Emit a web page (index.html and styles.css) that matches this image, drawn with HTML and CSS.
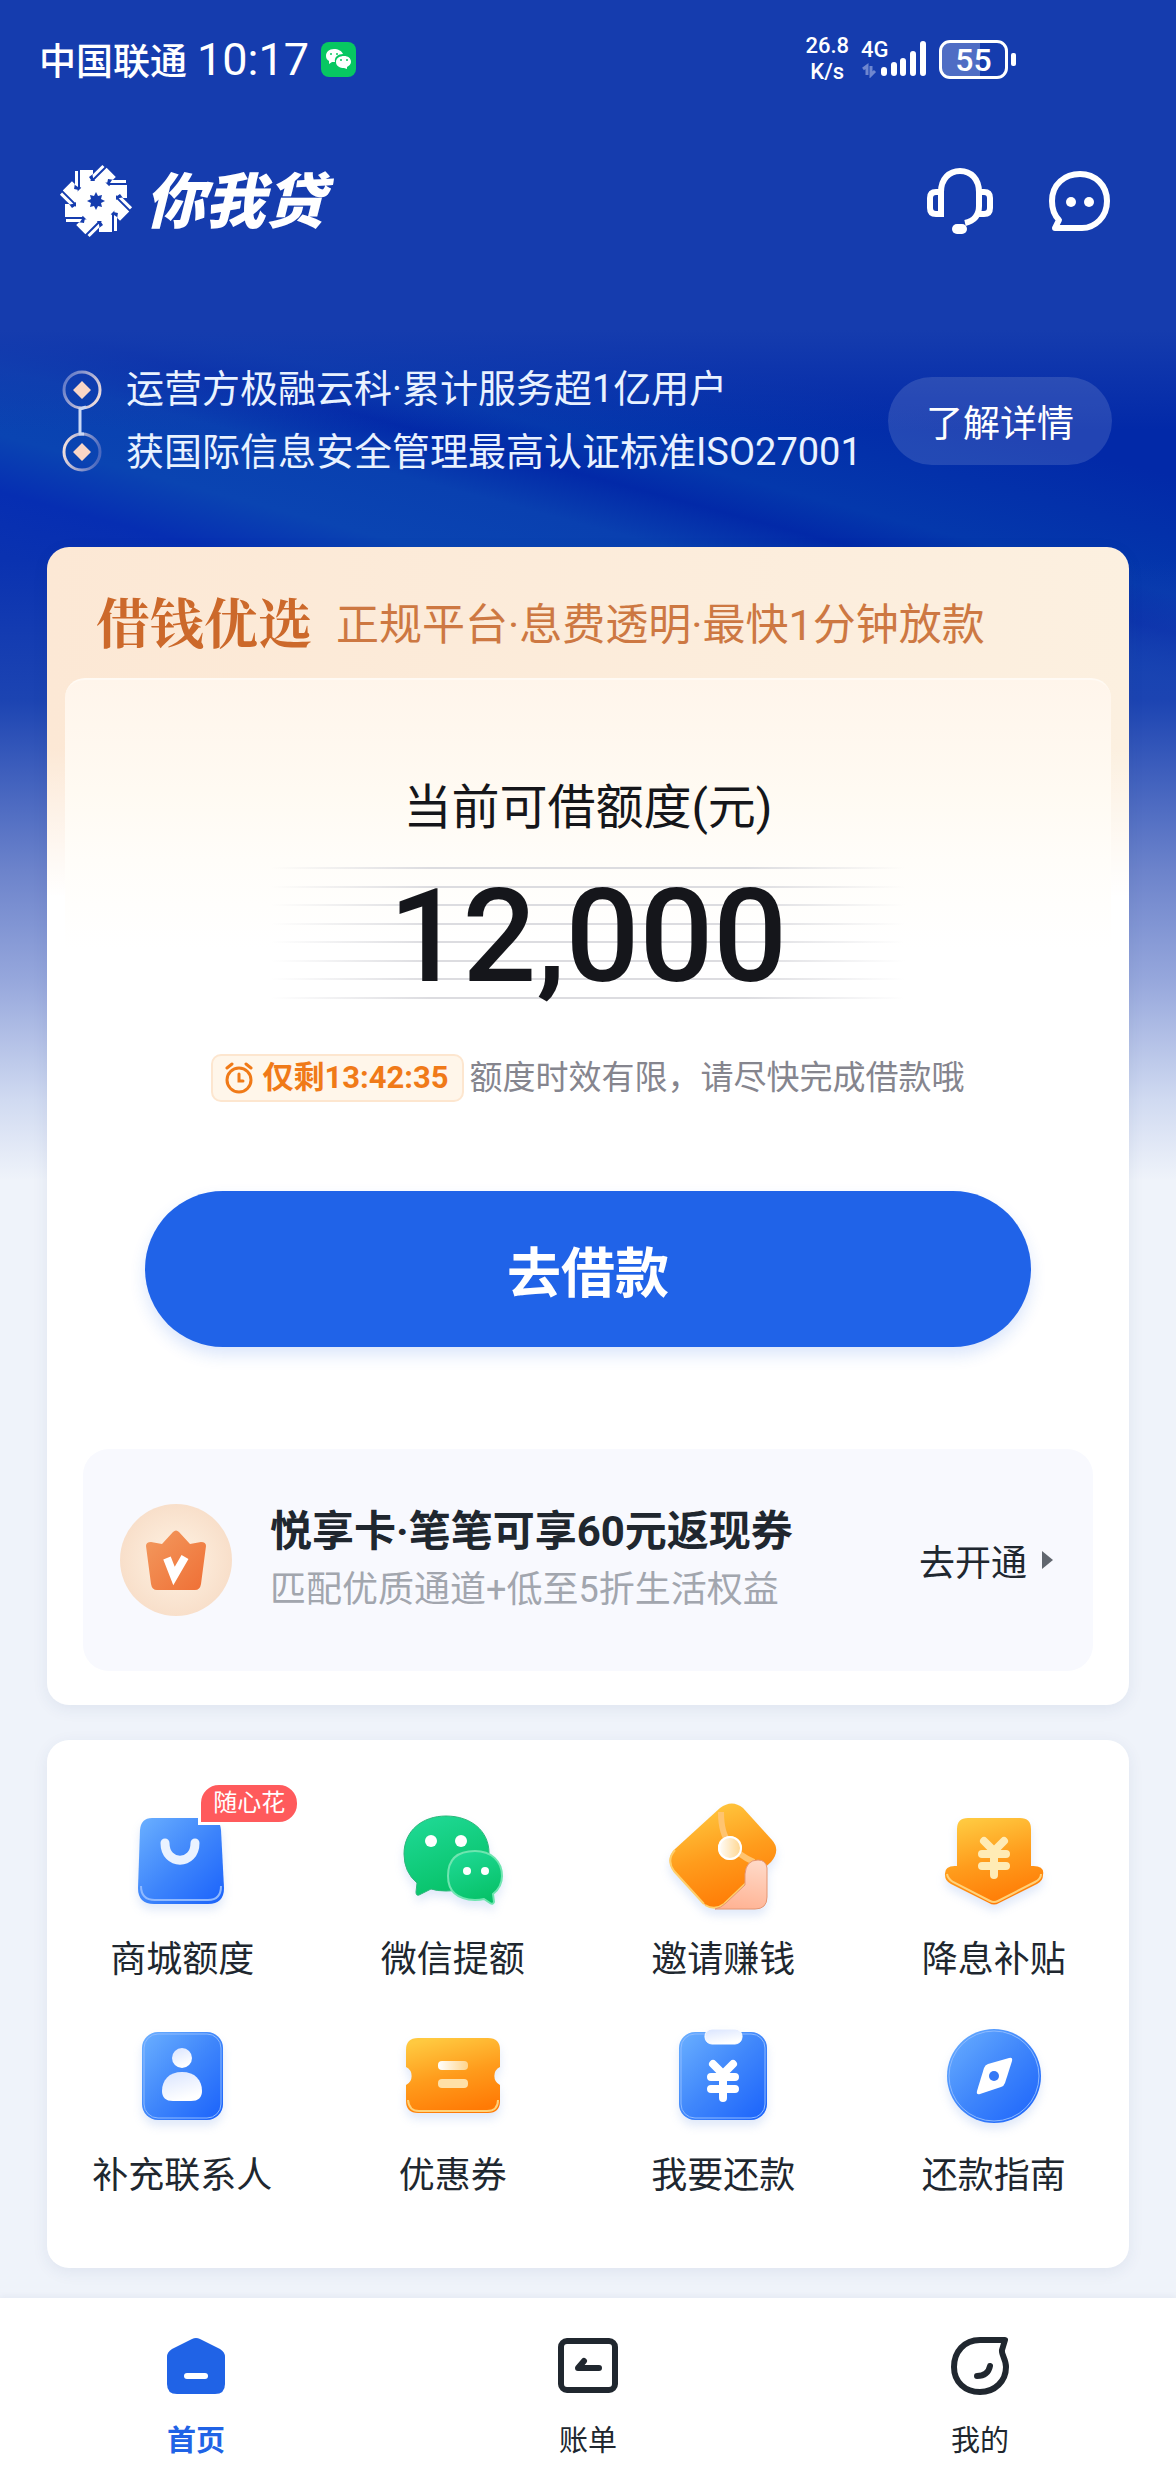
FILE: index.html
```html
<!DOCTYPE html>
<html lang="zh-CN">
<head>
    <meta charset="UTF-8">
    <meta name="viewport" content="width=device-width, initial-scale=1.0">
    <title>你我贷</title>
    <link rel="stylesheet" href="styles.css">
</head>
<body>
    <!-- shared gradients and shapes -->
    <svg class="defs" width="0" height="0" aria-hidden="true">
        <defs>
            <linearGradient id="blue" x1="0" y1="0" x2="1" y2="1">
                <stop offset="0" stop-color="#6bb0ff"/>
                <stop offset="0.5" stop-color="#3f86fb"/>
                <stop offset="1" stop-color="#1a62fb"/>
            </linearGradient>
            <linearGradient id="orange" x1="0.3" y1="0" x2="0.6" y2="1">
                <stop offset="0" stop-color="#ffc940"/>
                <stop offset="0.5" stop-color="#ff9c1c"/>
                <stop offset="1" stop-color="#ff7a05"/>
            </linearGradient>
            <linearGradient id="green" x1="0.2" y1="0" x2="0.6" y2="1">
                <stop offset="0" stop-color="#1fd995"/>
                <stop offset="1" stop-color="#06c167"/>
            </linearGradient>
            <linearGradient id="pale" x1="0" y1="0" x2="0.4" y2="1">
                <stop offset="0" stop-color="#d9e4ff"/>
                <stop offset="1" stop-color="#ffffff"/>
            </linearGradient>
            <linearGradient id="cream" x1="0" y1="0" x2="1" y2="0">
                <stop offset="0" stop-color="#ffffff"/>
                <stop offset="1" stop-color="#ffd48a"/>
            </linearGradient>
            <linearGradient id="peach" x1="0.6" y1="0" x2="0.4" y2="1">
                <stop offset="0" stop-color="#ffd9c7"/>
                <stop offset="1" stop-color="#ffb394"/>
            </linearGradient>
            <linearGradient id="crown" x1="0" y1="0" x2="1" y2="1">
                <stop offset="0" stop-color="#f39a5f"/>
                <stop offset="1" stop-color="#ef6f35"/>
            </linearGradient>
            <radialGradient id="coin">
                <stop offset="0" stop-color="#fff3e4"/>
                <stop offset="1" stop-color="#f8dfca"/>
            </radialGradient>
            <linearGradient id="line" x1="0" y1="0" x2="1" y2="0">
                <stop offset="0" stop-color="#dcdce0" stop-opacity="0"/>
                <stop offset="0.25" stop-color="#dcdce0"/>
                <stop offset="0.75" stop-color="#dcdce0"/>
                <stop offset="1" stop-color="#dcdce0" stop-opacity="0"/>
            </linearGradient>
            <linearGradient id="ringTop" x1="0" y1="0.2" x2="1" y2="0.8">
                <stop offset="0" stop-color="#5c76c8"/>
                <stop offset="1" stop-color="#f6e2dc"/>
            </linearGradient>
            <linearGradient id="ringBottom" x1="0" y1="0.2" x2="1" y2="0.4">
                <stop offset="0" stop-color="#f6e2dc"/>
                <stop offset="1" stop-color="#4a69c0"/>
            </linearGradient>
            <g id="blade">
                <path d="M-16-31H-3V-27L-7-24L-5-21L-13-12L-16-14Z"/>
                <path d="M-21-30H-18V-14L-21-16Z"/>
            </g>
            <g id="yen" fill="none" stroke-width="8" stroke-linecap="round">
                <path d="M-10-17L0-7L10-17M-12-4H12M-12 8H12M0-6V17"/>
            </g>
        </defs>
    </svg>

    <header class="hero">
        <div class="statusbar">
            <span class="carrier">中国联通</span>
            <span class="time">10:17</span>
            <svg class="app-badge" viewBox="0 0 35 35" aria-hidden="true">
                <rect width="35" height="35" rx="8" fill="#07c762"/>
                <path d="M13 7c-5 0-8 3-8 7 0 2 1 4 3 5v3l3-2h3c-1-5 3-8 8-8-1-3-5-5-9-5Z" fill="#fff"/>
                <path d="M23 14c-4 0-8 2-8 6s4 6 8 6l3 1v-2c2-1 4-3 4-5 0-4-3-6-7-6Z" fill="#fff"/>
                <g fill="#07c762"><circle cx="10" cy="12" r="1"/><circle cx="16" cy="12" r="1"/><circle cx="20" cy="18" r="1"/><circle cx="26" cy="18" r="1"/></g>
            </svg>
            <div class="system">
                <div class="speed"><span>26.8</span><span>K/s</span></div>
                <div class="signal">
                    <span class="network">4G</span>
                    <svg width="66" height="38" viewBox="0 0 66 38" aria-hidden="true">
                        <g stroke="#fff" stroke-width="6" stroke-linecap="round">
                            <path d="M23 30V33M33 25V33M42 21V33M52 14V33M62 4V33"/>
                        </g>
                        <path d="M2 29L6 26V35M10 26V35L14 31" fill="none" stroke="#6f87cf" stroke-width="3"/>
                    </svg>
                </div>
                <div class="battery"><span>55</span></div>
            </div>
        </div>

        <div class="topbar">
            <a href="#" class="brand">
                <svg width="74" height="74" viewBox="-37 -37 74 74" fill="#fff" aria-hidden="true">
                    <path fill-rule="evenodd" d="M-8-20L8-20L20-8V8L8 20H-8L-20 8V-8ZM0-9L-2-5L-6-6L-5-2L-9 0L-5 2L-6 6L-2 5L0 9L2 5L6 6L5 2L9 0L5-2L6-6L2-5Z"/>
                    <use href="#blade"/>
                    <use href="#blade" transform="rotate(45)"/>
                    <use href="#blade" transform="rotate(90)"/>
                    <use href="#blade" transform="rotate(135)"/>
                    <use href="#blade" transform="rotate(180)"/>
                    <use href="#blade" transform="rotate(225)"/>
                    <use href="#blade" transform="rotate(270)"/>
                    <use href="#blade" transform="rotate(315)"/>
                </svg>
                <span>你我贷</span>
            </a>
            <div class="actions">
                <button type="button" class="icon-button" aria-label="客服">
                    <svg width="66" height="66" viewBox="0 0 66 66" fill="none" stroke="#fff" stroke-width="6" aria-hidden="true">
                        <path d="M14 24v22H9q-6 0-6-6V30q0-6 6-6h5c0-13 8-21 19-21s19 8 19 21v14c0 10-5 15-14 17"/>
                        <path d="M52 24h5q6 0 6 6v10q0 6-6 6h-5"/>
                        <path d="M30 61h5" stroke-width="10" stroke-linecap="round"/>
                    </svg>
                </button>
                <button type="button" class="icon-button" aria-label="消息">
                    <svg width="66" height="66" viewBox="0 0 66 66" fill="none" stroke="#fff" stroke-width="6" stroke-linejoin="round" aria-hidden="true">
                        <path d="M8 60L12 52C6 46 5 40 5 33C5 16 18 6 33 6S60 17 60 33S48 60 35 60Z"/>
                        <circle cx="24" cy="34" r="5" fill="#fff" stroke="none"/>
                        <circle cx="42" cy="34" r="5" fill="#fff" stroke="none"/>
                    </svg>
                </button>
            </div>
        </div>

        <div class="intro">
            <svg class="intro-mark" width="40" height="102" viewBox="0 0 40 102" fill="none" aria-hidden="true">
                <circle cx="20" cy="20" r="18" stroke="url(#ringTop)" stroke-width="3"/>
                <circle cx="20" cy="82" r="18" stroke="url(#ringBottom)" stroke-width="3"/>
                <path d="M24 37L18 39V64L22 64" stroke="#c9d8f5" stroke-width="3"/>
                <path d="M20 11L29 20L20 29L11 20ZM20 73L29 82L20 91L11 82Z" fill="#f9d6c6"/>
            </svg>
            <ul class="intro-list">
                <li>运营方极融云科·累计服务超1亿用户</li>
                <li>获国际信息安全管理最高认证标准ISO27001</li>
            </ul>
            <button type="button" class="detail-button">了解详情</button>
        </div>
    </header>

    <main>
        <section class="loan-card">
            <div class="loan-head">
                <h1>借钱优选</h1>
                <p>正规平台·息费透明·最快1分钟放款</p>
            </div>
            <div class="loan-panel">
                <h2>当前可借额度(元)</h2>
                <div class="amount">
                    <svg class="amount-lines" viewBox="0 0 634 132" preserveAspectRatio="none" fill="url(#line)" aria-hidden="true">
                        <rect y="0" width="634" height="2"/>
                        <rect y="19" width="634" height="2"/>
                        <rect y="37" width="634" height="2"/>
                        <rect y="56" width="634" height="2"/>
                        <rect y="74" width="634" height="2"/>
                        <rect y="93" width="634" height="2"/>
                        <rect y="111" width="634" height="2"/>
                        <rect y="130" width="634" height="2"/>
                    </svg>
                    <strong>12,000</strong>
                </div>
                <div class="countdown">
                    <span class="countdown-tag">
                        <svg width="30" height="32" viewBox="0 0 30 32" fill="none" stroke="#f07a18" stroke-width="3" stroke-linecap="round" aria-hidden="true">
                            <circle cx="15" cy="18" r="12"/>
                            <path d="M15 12V19H19M3 6L8 2M27 6L22 2"/>
                        </svg>
                        仅剩13:42:35
                    </span>
                    <span>额度时效有限，请尽快完成借款哦</span>
                </div>
                <button type="button" class="borrow-button">去借款</button>
            </div>
            <a href="#" class="vip">
                <svg width="112" height="112" viewBox="0 0 112 112" aria-hidden="true">
                    <circle cx="56" cy="56" r="56" fill="url(#coin)"/>
                    <path d="M26 42q0-4 5-4l11 2 11-12q3-3 6 0l11 12 11-2q5 0 5 4l-5 38q-1 6-6 6H37q-5 0-6-6Z" fill="url(#crown)"/>
                    <path d="M47 54L54 72L65 53" fill="none" stroke="#fff" stroke-width="8"/>
                </svg>
                <div class="vip-text">
                    <h3>悦享卡·笔笔可享60元返现券</h3>
                    <p>匹配优质通道+低至5折生活权益</p>
                </div>
                <span class="vip-go">去开通</span>
            </a>
        </section>

        <section class="services">
            <a href="#" class="service">
                <svg viewBox="0 0 120 120" aria-hidden="true">
                    <path d="M30 18H86q12 0 13 12l3 58q0 16-16 16H32q-16 0-16-16l2-58q1-12 12-12Z" fill="url(#blue)"/>
                    <path d="M19 86q0 14 14 14H86q13 0 13-14" fill="none" stroke="#8fb9ff" stroke-width="2"/>
                    <path d="M43 43C43 66 73 66 73 43" fill="none" stroke="#eaf2ff" stroke-width="9" stroke-linecap="round"/>
                </svg>
                <span class="tag">随心花</span>
                <span>商城额度</span>
            </a>
            <a href="#" class="service">
                <svg viewBox="0 0 120 120" aria-hidden="true">
                    <path d="M53 16c25 0 43 15 43 37S78 91 53 91q-9 0-15-2l-12 6q-3 1-3-3l1-9Q11 72 11 54C11 31 29 16 53 16Z" fill="url(#green)" stroke="#2bb77a" stroke-width="1"/>
                    <path d="M82 51c16 0 27 10 27 25q0 11-9 18l1 8q-1 3-4 1l-6-4q-4 1-9 1-27-1-27-24 0-25 27-25Z" fill="url(#green)" stroke="#6fe5b0" stroke-width="2"/>
                    <g fill="#fff"><circle cx="38" cy="41" r="6"/><circle cx="68" cy="41" r="6"/><circle cx="74" cy="71" r="4"/><circle cx="92" cy="71" r="4"/></g>
                </svg>
                <span>微信提额</span>
            </a>
            <a href="#" class="service">
                <svg viewBox="0 0 120 120" aria-hidden="true">
                    <path d="M57 8q12-9 23 0l29 32q9 10-1 22L62 104q-10 8-21 0L11 71q-9-11 1-22Z" fill="url(#orange)"/>
                    <path d="M41 104L11 71q-8-11 1-21M42 105q10 6 19-1L83 83" fill="none" stroke="#ffcf6b" stroke-width="2"/>
                    <path d="M58 12Q58 34 67 44Q75 55 91 62" fill="none" stroke="#ffc470" stroke-width="6"/>
                    <path d="M52 109q6-1 11-6L82 85V74q1-14 13-14q8 0 9 8V97q0 12-12 12Z" fill="url(#peach)" stroke="#e59673" stroke-width="1"/>
                    <circle cx="67" cy="48" r="12" fill="url(#cream)"/>
                    <circle cx="67" cy="48" r="11" fill="none" stroke="#fff" stroke-width="2"/>
                </svg>
                <span>邀请赚钱</span>
            </a>
            <a href="#" class="service">
                <svg viewBox="0 0 120 120" aria-hidden="true">
                    <path d="M34 18H86q11 0 11 11V66q14-1 12 9 0 6-6 9L65 103q-5 3-10 0L17 84q-6-3-6-9-1-10 12-9V29q0-11 11-11Z" fill="url(#orange)"/>
                    <path d="M13 74q1 5 6 8l37 19q4 2 8 0L101 82q6-3 6-8" fill="none" stroke="#ffd27a" stroke-width="2"/>
                    <use href="#yen" x="60" y="58" stroke="#ffebb5"/>
                </svg>
                <span>降息补贴</span>
            </a>
            <a href="#" class="service">
                <svg viewBox="0 0 120 120" aria-hidden="true">
                    <rect x="20" y="16" width="81" height="88" rx="16" fill="url(#blue)"/>
                    <rect x="22" y="18" width="77" height="84" rx="14" fill="none" stroke="#8dbaff" stroke-width="1"/>
                    <circle cx="60" cy="42" r="10" fill="url(#pale)"/>
                    <path d="M60 56c13 0 20 8 20 19q0 10-11 10H51q-11 0-11-10c0-11 7-19 20-19Z" fill="url(#pale)"/>
                </svg>
                <span>补充联系人</span>
            </a>
            <a href="#" class="service">
                <svg viewBox="0 0 120 120" aria-hidden="true">
                    <path d="M25 22H95q12 0 12 12V51a10 10 0 0 0 0 18V85q0 12-12 12H25q-12 0-12-12V69a10 10 0 0 0 0-18V34q0-12 12-12Z" fill="url(#orange)"/>
                    <path d="M15 84q1 11 11 11H94q11 0 11-11" fill="none" stroke="#ffd27a" stroke-width="2"/>
                    <rect x="45" y="45" width="30" height="9" rx="4" fill="url(#cream)"/>
                    <rect x="45" y="63" width="30" height="9" rx="4" fill="#ffe0a6"/>
                </svg>
                <span>优惠券</span>
            </a>
            <a href="#" class="service">
                <svg viewBox="0 0 120 120" aria-hidden="true">
                    <rect x="16" y="16" width="88" height="88" rx="16" fill="url(#blue)"/>
                    <rect x="18" y="18" width="84" height="84" rx="14" fill="none" stroke="#8dbaff" stroke-width="1"/>
                    <rect x="42" y="13" width="37" height="15" rx="7" fill="url(#pale)" stroke="#fff" stroke-width="1"/>
                    <use href="#yen" x="60" y="65" stroke="#fff"/>
                </svg>
                <span>我要还款</span>
            </a>
            <a href="#" class="service">
                <svg viewBox="0 0 120 120" aria-hidden="true">
                    <circle cx="60" cy="60" r="47" fill="url(#blue)"/>
                    <circle cx="60" cy="60" r="45" fill="none" stroke="#8dbaff" stroke-width="1"/>
                    <path d="M50 52q1-3 4-4L75 42q4-1 3 3L71 67q-1 3-4 4L46 78q-4 1-3-3Z" fill="#fff"/>
                    <circle cx="60" cy="60" r="5" fill="#3478f6"/>
                </svg>
                <span>还款指南</span>
            </a>
        </section>
    </main>

    <nav class="tabbar">
        <a href="#" class="tab active">
            <svg width="60" height="60" viewBox="0 0 60 60" aria-hidden="true">
                <path d="M26 3q4-2 8 0L54 13q5 3 5 8V48q0 10-10 10H11Q1 58 1 48V21q0-5 5-8Z" fill="#2063e6"/>
                <path d="M21 40H39" stroke="#fff" stroke-width="6" stroke-linecap="round"/>
            </svg>
            <span>首页</span>
        </a>
        <a href="#" class="tab">
            <svg width="60" height="60" viewBox="0 0 60 60" fill="none" stroke="#20272f" stroke-width="6" aria-hidden="true">
                <rect x="3" y="5" width="54" height="49" rx="6"/>
                <path d="M41 32H20L26 25" stroke-linecap="round" stroke-linejoin="round"/>
            </svg>
            <span>账单</span>
        </a>
        <a href="#" class="tab">
            <svg width="60" height="60" viewBox="0 0 60 60" fill="none" stroke="#20272f" stroke-width="6" stroke-linejoin="round" aria-hidden="true">
                <path d="M55 4H30C14 4 4 16 4 31S15 56 30 56S56 45 56 31C56 23 51 18 52 14Z"/>
                <path d="M27 40Q38 40 40 30" stroke-linecap="round"/>
            </svg>
            <span>我的</span>
        </a>
    </nav>
</body>
</html>
```

FILE: styles.css
```css
* {
    box-sizing: border-box;
    margin: 0;
    padding: 0;
}

body {
    display: flex;
    flex-direction: column;
    min-height: 100vh;
    font-family: Roboto, "Noto Sans CJK SC", sans-serif;
    color: #20272f;
    background-color: #eff3fa;
    /* soft diagonal waves over a blue that fades out behind the card */
    background-image:
        linear-gradient(to bottom, #153cae 330px, rgba(21, 60, 174, 0) 430px),
        linear-gradient(to bottom, rgba(28, 68, 178, 0) 560px, #1c44b2 700px, #6c83cb 870px, #96a7dc 980px, #d0daf1 1100px, #eff3fa 1180px),
        linear-gradient(195deg, #0229a8 0, #0229a8 460px, #0438ac 575px, #0229a8 612px, #0940b0 660px, #0a44b2 725px, #062eb2 780px, #0a32b0 840px);
    background-size: 100% 1180px;
    background-repeat: no-repeat;
}

a {
    color: inherit;
    text-decoration: none;
}

button {
    border: none;
    font-family: inherit;
    color: #fff;
    cursor: pointer;
}

svg {
    display: block;
    flex-shrink: 0;
}

.defs {
    position: absolute;
}

/* status bar */
.statusbar {
    display: flex;
    align-items: center;
    height: 118px;
    padding: 0 168px 0 39px;
    color: #fff;
}

.carrier {
    font-size: 37px;
    font-weight: 500;
}

.time {
    margin-left: 10px;
    font-size: 45px;
}

.app-badge {
    width: 35px;
    height: 35px;
    margin-left: 12px;
}

.system {
    display: flex;
    align-items: center;
    gap: 12px;
    margin-left: auto;
}

.speed {
    display: flex;
    flex-direction: column;
    align-items: center;
    font-size: 22px;
    font-weight: 500;
    line-height: 26px;
}

.signal {
    position: relative;
}

.network {
    position: absolute;
    top: -1px;
    left: 0;
    font-size: 22px;
    font-weight: 500;
    line-height: 22px;
}

.battery {
    position: relative;
    width: 69px;
    height: 39px;
    border: 3px solid #fff;
    border-radius: 11px;
    background: linear-gradient(to right, #4f6dc4 60%, transparent 60%);
    font-size: 32px;
    font-weight: 500;
    line-height: 34px;
    text-align: center;
}

.battery::after {
    content: "";
    position: absolute;
    top: 10px;
    right: -11px;
    width: 5px;
    height: 13px;
    border-radius: 2px;
    background-color: #fff;
}

/* logo row */
.topbar {
    display: flex;
    align-items: center;
    justify-content: space-between;
    height: 166px;
    padding: 0 63px 0 59px;
}

.brand {
    display: flex;
    align-items: center;
    gap: 12px;
    color: #fff;
    font-size: 60px;
    font-weight: 900;
    font-style: italic;
    line-height: 74px;
}

.brand span {
    padding-top: 4px;
}

.actions {
    display: flex;
    gap: 54px;
}

.icon-button {
    background: none;
}

/* intro lines */
.intro {
    display: flex;
    align-items: center;
    padding: 74px 64px 63px 62px;
    color: #fff;
}

.intro-list {
    margin-left: 24px;
    list-style: none;
    font-size: 38px;
    line-height: 63px;
    color: #e9f2ff;
    white-space: nowrap;
}

.detail-button {
    width: 224px;
    height: 88px;
    margin-left: auto;
    border-radius: 44px;
    background-color: rgba(255, 255, 255, 0.13);
    font-size: 37px;
}

/* loan card */
main {
    padding: 0 47px;
}

.loan-card {
    padding: 0 18px 34px;
    border-radius: 22px;
    background:
        linear-gradient(to bottom, rgba(255, 255, 255, 0) 200px, #fff 350px),
        linear-gradient(to right, #fce8d5, #fcf0e0);
    box-shadow: 0 4px 16px rgba(40, 60, 110, 0.08);
}

.loan-head {
    display: flex;
    align-items: center;
    gap: 24px;
    height: 131px;
    padding: 16px 31px 0;
    white-space: nowrap;
}

.loan-head h1 {
    font-family: "Noto Serif CJK SC", "Noto Sans CJK SC", serif;
    font-size: 54px;
    font-weight: 700;
    color: #cc692b;
}

.loan-head p {
    font-size: 43px;
    color: #cd7842;
}

.loan-panel {
    display: flex;
    flex-direction: column;
    align-items: center;
    padding: 100px 80px 102px;
    border-top: 2px solid #fffaf4;
    border-radius: 20px;
    background: linear-gradient(to bottom, #fff5eb, #fffaf2 110px, #fffdf9 180px, #fff 270px);
}

.loan-panel h2 {
    font-size: 48px;
    font-weight: 400;
    line-height: 56px;
    color: #15161a;
}

.amount {
    display: grid;
    align-items: center;
    justify-items: center;
    width: 634px;
    max-width: 100%;
    margin-top: 31px;
}

.amount-lines,
.amount strong {
    grid-area: 1 / 1;
}

.amount-lines {
    width: 100%;
    height: 132px;
}

.amount strong {
    padding-top: 8px;
    font-size: 130px;
    font-weight: 500;
    line-height: 124px;
    color: #15161b;
}

.countdown {
    display: flex;
    align-items: center;
    gap: 6px;
    margin-top: 55px;
    font-size: 33px;
    line-height: 46px;
    color: #85858e;
    white-space: nowrap;
}

.countdown-tag {
    display: flex;
    align-items: center;
    gap: 8px;
    padding: 0 13px 0 11px;
    border: 2px solid #fde6cf;
    border-radius: 10px;
    background-color: #fff6ea;
    font-size: 31px;
    font-weight: 700;
    line-height: 44px;
    color: #f07a18;
}

.borrow-button {
    width: 100%;
    height: 156px;
    margin-top: 89px;
    border-radius: 78px;
    background-color: #2063e8;
    box-shadow: 0 8px 16px rgba(32, 99, 232, 0.16);
    font-size: 54px;
    font-weight: 700;
}

/* membership strip */
.vip {
    display: flex;
    align-items: center;
    margin: 0 18px;
    height: 222px;
    padding: 0 40px 0 37px;
    border-radius: 26px;
    background-color: #f8f9fe;
}

.vip-text {
    margin-left: 38px;
    white-space: nowrap;
}

.vip-text h3 {
    font-size: 42px;
    font-weight: 700;
    line-height: 60px;
}

.vip-text p {
    font-size: 36px;
    line-height: 56px;
    color: #a2a6ae;
}

.vip-go {
    display: flex;
    align-items: center;
    gap: 15px;
    margin-left: auto;
    font-size: 36px;
    white-space: nowrap;
}

.vip-go::after {
    content: "";
    border-left: 11px solid #62676f;
    border-top: 9px solid transparent;
    border-bottom: 9px solid transparent;
}

/* service grid */
.services {
    display: grid;
    grid-template-columns: repeat(4, 1fr);
    row-gap: 32px;
    margin-top: 35px;
    padding: 60px 0 68px;
    border-radius: 22px;
    background-color: #fff;
    box-shadow: 0 4px 16px rgba(40, 60, 110, 0.08);
}

.service {
    position: relative;
    display: flex;
    flex-direction: column;
    align-items: center;
    gap: 16px;
    font-size: 36px;
    line-height: 48px;
}

.service svg {
    width: 120px;
    height: 120px;
    filter: drop-shadow(0 6px 5px rgba(60, 120, 220, 0.16));
}

.tag {
    position: absolute;
    top: -18px;
    left: 50%;
    margin-left: 16px;
    padding: 0 12px;
    border: 3px solid #fff;
    border-radius: 21px 21px 21px 0;
    background-color: #ff5a5c;
    color: #fff;
    font-size: 24px;
    line-height: 37px;
}

/* bottom tabs */
.tabbar {
    display: grid;
    grid-template-columns: repeat(3, 1fr);
    height: 182px;
    margin-top: auto;
    padding-top: 38px;
    background-color: #fff;
    box-shadow: 0 -2px 6px rgba(40, 60, 110, 0.05);
}

.tab {
    display: flex;
    flex-direction: column;
    align-items: center;
    gap: 25px;
    font-size: 29px;
    line-height: 40px;
}

.tab.active {
    color: #2063e6;
    font-weight: 700;
}
```
